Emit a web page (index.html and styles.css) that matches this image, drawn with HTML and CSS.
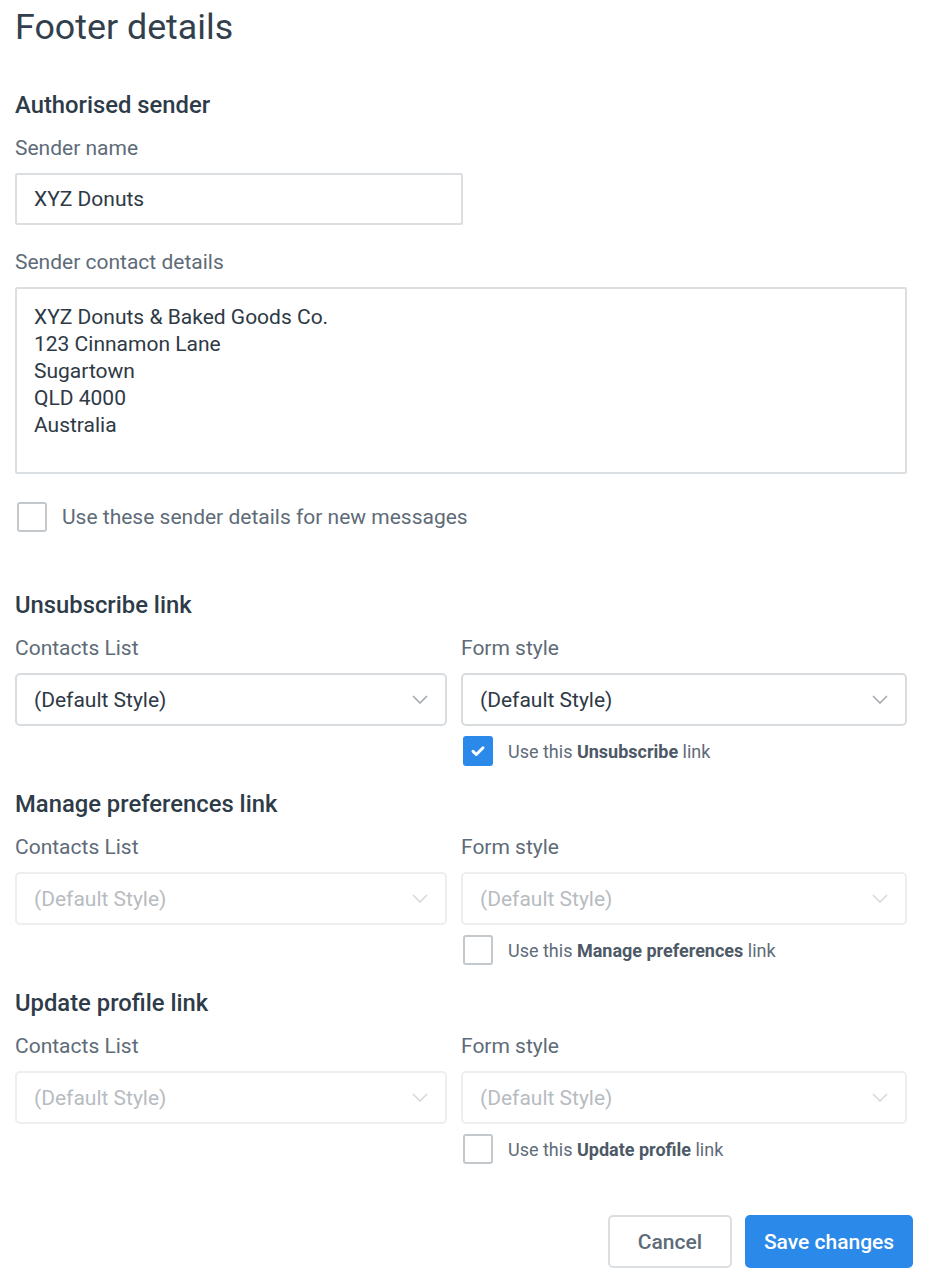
FILE: index.html
```html
<!DOCTYPE html>
<html lang="en">
<head>
<meta charset="utf-8">
<title>Footer details</title>
<link rel="stylesheet" href="styles.css">
</head>
<body>
<div class="page">
  <h1 class="title">Footer details</h1>

  <section class="sender">
    <h2 class="section-heading">Authorised sender</h2>
    <div class="label">Sender name</div>
    <div class="input">XYZ Donuts</div>
    <div class="label label-gap">Sender contact details</div>
    <div class="textarea">XYZ Donuts &amp; Baked Goods Co.<br>123 Cinnamon Lane<br>Sugartown<br>QLD 4000<br>Australia</div>
    <label class="check-row check-large">
      <span class="box"></span>
      <span class="check-text">Use these sender details for new messages</span>
    </label>
  </section>

  <section class="link-section first">
    <h2 class="section-heading">Unsubscribe link</h2>
    <div class="cols">
      <div class="col col-left">
        <div class="label">Contacts List</div>
        <div class="select"><span>(Default Style)</span><svg class="chev" viewBox="0 0 16 9" width="16" height="9"><path d="M1 1l7 7 7-7" fill="none" stroke="currentColor" stroke-width="1.6"/></svg></div>
      </div>
      <div class="col">
        <div class="label">Form style</div>
        <div class="select"><span>(Default Style)</span><svg class="chev" viewBox="0 0 16 9" width="16" height="9"><path d="M1 1l7 7 7-7" fill="none" stroke="currentColor" stroke-width="1.6"/></svg></div>
        <label class="check-row check-small">
          <span class="box checked"><svg viewBox="0 0 16 16" width="16" height="16"><path d="M3 8.3l3.3 3.2L13 4.8" fill="none" stroke="#fff" stroke-width="3" stroke-linecap="round" stroke-linejoin="round"/></svg></span>
          <span class="check-text">Use this <b>Unsubscribe</b> link</span>
        </label>
      </div>
    </div>
  </section>

  <section class="link-section">
    <h2 class="section-heading">Manage preferences link</h2>
    <div class="cols">
      <div class="col col-left">
        <div class="label">Contacts List</div>
        <div class="select disabled"><span>(Default Style)</span><svg class="chev" viewBox="0 0 16 9" width="16" height="9"><path d="M1 1l7 7 7-7" fill="none" stroke="currentColor" stroke-width="1.6"/></svg></div>
      </div>
      <div class="col">
        <div class="label">Form style</div>
        <div class="select disabled"><span>(Default Style)</span><svg class="chev" viewBox="0 0 16 9" width="16" height="9"><path d="M1 1l7 7 7-7" fill="none" stroke="currentColor" stroke-width="1.6"/></svg></div>
        <label class="check-row check-small">
          <span class="box"></span>
          <span class="check-text">Use this <b>Manage preferences</b> link</span>
        </label>
      </div>
    </div>
  </section>

  <section class="link-section">
    <h2 class="section-heading">Update profile link</h2>
    <div class="cols">
      <div class="col col-left">
        <div class="label">Contacts List</div>
        <div class="select disabled"><span>(Default Style)</span><svg class="chev" viewBox="0 0 16 9" width="16" height="9"><path d="M1 1l7 7 7-7" fill="none" stroke="currentColor" stroke-width="1.6"/></svg></div>
      </div>
      <div class="col">
        <div class="label">Form style</div>
        <div class="select disabled"><span>(Default Style)</span><svg class="chev" viewBox="0 0 16 9" width="16" height="9"><path d="M1 1l7 7 7-7" fill="none" stroke="currentColor" stroke-width="1.6"/></svg></div>
        <label class="check-row check-small">
          <span class="box"></span>
          <span class="check-text">Use this <b>Update profile</b> link</span>
        </label>
      </div>
    </div>
  </section>

  <div class="actions">
    <button class="btn btn-cancel">Cancel</button>
    <button class="btn btn-save">Save changes</button>
  </div>
</div>
</body>
</html>
```

FILE: styles.css
```css
* { box-sizing: border-box; }

html, body {
  margin: 0;
  padding: 0;
  background: #ffffff;
}

body {
  font-family: Roboto, "Liberation Sans", Arial, sans-serif;
  color: #2e3b48;
}

.page {
  width: 907px;
  padding-left: 15px;
}

.title {
  margin: 7px 0 0;
  font-size: 35.8px;
  line-height: 40px;
  font-weight: 400;
  color: #323f4c;
}

.section-heading {
  margin: 0;
  font-size: 23.8px;
  line-height: 26px;
  font-weight: 500;
  color: #2e3b48;
}

.sender .section-heading {
  margin-top: 45px;
}

.label {
  margin-top: 18px;
  font-size: 21px;
  line-height: 24px;
  color: #5e6b78;
}

.label-gap {
  margin-top: 25px;
}

.input {
  margin-top: 13px;
  width: 448px;
  height: 52px;
  border: 2px solid #dcdfe2;
  border-radius: 2px;
  padding: 0 17px;
  display: flex;
  align-items: center;
  font-size: 21px;
  color: #2e3945;
}

.textarea {
  margin-top: 13px;
  width: 892px;
  height: 187px;
  border: 2px solid #dcdfe2;
  border-radius: 2px;
  padding: 15px 17px;
  font-size: 21px;
  line-height: 27px;
  color: #2e3945;
}

.check-row {
  display: flex;
  align-items: center;
  cursor: pointer;
}

.box {
  flex: none;
  display: flex;
  align-items: center;
  justify-content: center;
  border: 2px solid #c3c8cd;
  border-radius: 3px;
  background: #fff;
}

.box.checked {
  background: #2b89e9;
  border-color: #2b89e9;
}

.check-large {
  margin-top: 28px;
  padding-left: 2px;
}

.check-large .box {
  width: 30px;
  height: 30px;
}

.check-large .check-text {
  margin-left: 15px;
  font-size: 21px;
  color: #5e6b78;
}

.check-small {
  margin-top: 10px;
  padding-left: 2px;
}

.check-small .box {
  width: 30px;
  height: 30px;
}

.check-small .check-text {
  margin-left: 15px;
  font-size: 18px;
  color: #5e6b78;
}

.check-text b {
  font-weight: 700;
  color: #4d5966;
}

.link-section {
  margin-top: 25px;
}

.link-section.first {
  margin-top: 60px;
}

.cols {
  display: grid;
  grid-template-columns: 446px 446px;
}

.col-left {
  padding-right: 14px;
}

.select {
  margin-top: 13px;
  height: 53px;
  border: 2px solid #d9dcdf;
  border-radius: 5px;
  padding: 0 17px 0 17px;
  display: flex;
  align-items: center;
  justify-content: space-between;
  font-size: 21px;
  color: #2e3945;
}

.select .chev {
  color: #a3a9af;
}

.select.disabled {
  border-color: #eceef0;
  color: #b7bcc1;
}

.select.disabled .chev {
  color: #d6d9dc;
}

.actions {
  margin-top: 51px;
  width: 898px;
  display: flex;
  justify-content: flex-end;
  gap: 13px;
}

.btn {
  height: 53px;
  border-radius: 5px;
  font-family: Roboto, "Liberation Sans", Arial, sans-serif;
  font-size: 21px;
  font-weight: 500;
  cursor: pointer;
}

.btn-cancel {
  width: 124px;
  background: #fff;
  border: 2px solid #dcdfe2;
  color: #5e6b78;
}

.btn-save {
  width: 168px;
  background: #2b89e9;
  border: 2px solid #2b89e9;
  color: #fff;
}
```
